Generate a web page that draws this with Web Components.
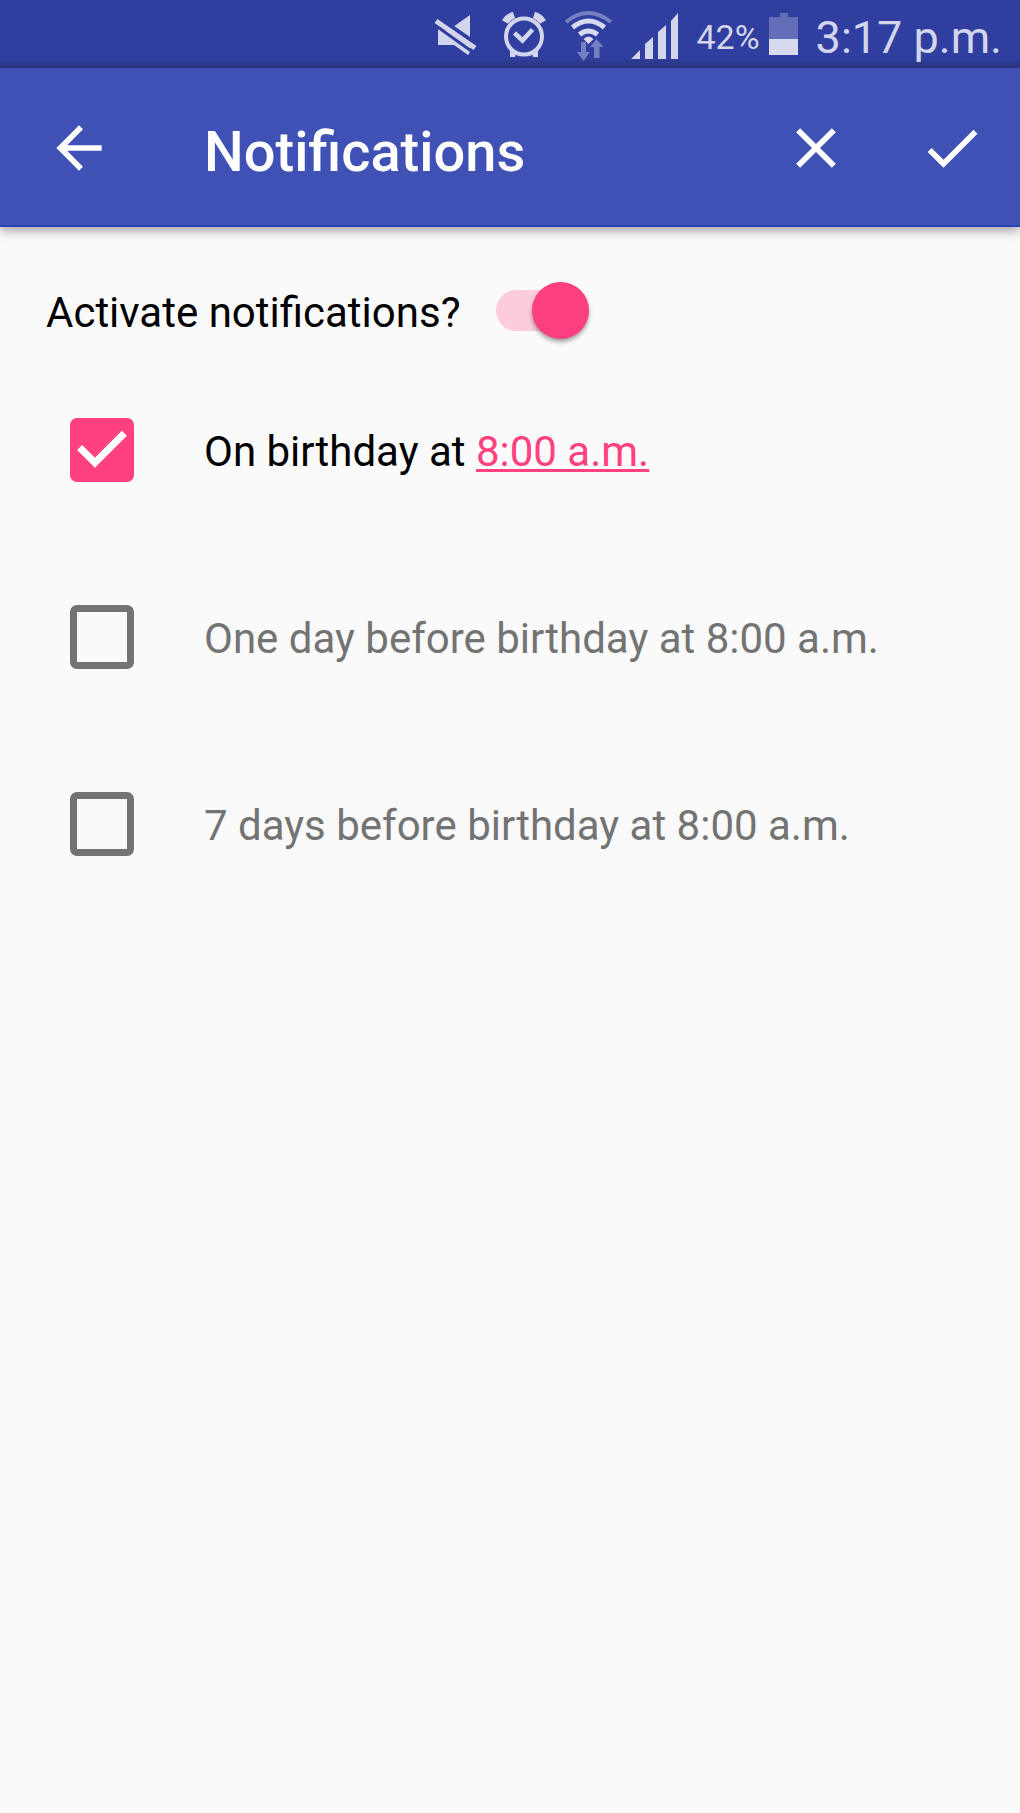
<!DOCTYPE html>
<html lang="en">
<head>
<meta charset="utf-8">
<meta name="viewport" content="width=device-width, initial-scale=1">
<title>Notifications</title>
<style>
  html, body { margin: 0; min-height: 100%; background: #fafafa; }
  body { font-family: Roboto, "Liberation Sans", sans-serif; font-size: 42px; color: #000; }
</style>
</head>
<body>
<notification-screen></notification-screen>
<script>
function define(name, html, setup) {
  const template = document.createElement('template');
  template.innerHTML = html;
  customElements.define(name, class extends HTMLElement {
    constructor() {
      super();
      this.attachShadow({ mode: 'open' }).append(template.content.cloneNode(true));
    }
    connectedCallback() { if (setup) setup(this, this.shadowRoot); }
  });
}

define('battery-level', `
  <style>
    :host { display: flex; align-items: center; gap: 8px; font-size: 34px; }
    svg { display: block; width: 32px; height: 62px; }
  </style>
  <span><slot></slot></span>
  <svg viewBox="768 6 32 62" fill="#d8dbef" aria-hidden="true">
    <path opacity=".3" d="M780 13h8v4h10v22h-29V17h11z"/><path d="M769 39h29v16h-29z"/>
  </svg>`);

define('status-bar', `
  <style>
    :host { display: flex; align-items: center; justify-content: flex-end; gap: 16px; box-sizing: border-box;
      height: 68px; padding: 6px 18px 0 16px; color: #d2d5ec; white-space: nowrap;
      background: linear-gradient(#303f9f 58px, #29367f 68px); }
    svg { display: block; width: 50px; height: 62px; flex: none; }
    svg.alarm { width: 48px; }
    time { font-size: 45px; }
  </style>
  <svg viewBox="436 6 50 62" fill="#d2d5ec" aria-hidden="true">
    <path d="M440 29V45H456L470 55L472 52V15L455 27L449 31z"/>
    <path d="M439 17L482 47" stroke="#303f9f" stroke-width="5"/>
    <path d="M434 23L476 53" stroke="#303f9f" stroke-width="3"/>
    <path d="M438 21L477 48" stroke="#d2d5ec" stroke-width="5"/>
  </svg>
  <svg class="alarm" viewBox="502 6 48 62" aria-hidden="true">
    <g fill="none" stroke="#d2d5ec">
      <circle cx="526" cy="36.500" r="18" stroke-width="4"/>
      <path d="M507 22q3-5 9-7M545 22q-3-5-9-7" stroke-width="7"/>
      <path d="M516.500 33l8 7.500 10-11" stroke-width="4.500"/>
    </g>
    <path fill="#d2d5ec" d="M512 50l6 3-1 4h-5zM540 50l-6 3 1 4h5z"/>
  </svg>
  <svg viewBox="566 6 50 62" aria-hidden="true">
    <g fill="none" stroke="#d8dbef" stroke-width="5">
      <path opacity=".42" stroke-width="4" d="M568 22q22-18 45 0"/>
      <path d="M574.500 27.500q16-13 32 0"/>
      <path d="M581.500 34.500q9-7 18 0"/>
    </g>
    <path fill="#d8dbef" d="M585.500 39q5-5 10 0l-5 5z"/>
    <path fill="#7480c2" d="M583 42h5v10h4l-6.500 9-6.500-9h4zM596 58v-11h-4l6.500-8 7 8h-4v11z"/>
  </svg>
  <svg viewBox="632 6 50 62" fill="#d2d5ec" aria-hidden="true">
    <path d="M633 59l9-9v9zM647 59V44l8-7v22zM660 59V32l8-7v34zM673 59V21l7-8v46z"/>
  </svg>
  <battery-level>42%</battery-level>
  <time datetime="15:17">3:17 p.m.</time>`);

define('icon-button', `
  <style>
    :host { display: block; flex: none; }
    button { display: grid; place-items: center; width: 136px; height: 156px; margin: 0; padding: 0;
      border: 0; background: none; color: inherit; cursor: pointer; }
    svg { width: 68px; height: 68px; fill: currentColor; }
  </style>
  <button type="button"><svg viewBox="0 0 24 24" aria-hidden="true"><path/></svg></button>`,
  (host, root) => {
    const icons = {
      back: 'M20 11H7.830l5.590-5.590L12 4l-8 8 8 8 1.410-1.410L7.830 13H20v-2z',
      close: 'M19 6.410L17.590 5 12 10.590 6.410 5 5 6.410 10.590 12 5 17.590 6.410 19 12 13.410 17.590 19 19 17.590 13.410 12z',
      check: 'M9 16.170L4.830 12l-1.420 1.410L9 19 21 7l-1.410-1.410z'
    };
    root.querySelector('path').setAttribute('d', icons[host.getAttribute('icon')]);
    root.querySelector('button').setAttribute('aria-label', host.getAttribute('label'));
  });

define('app-bar', `
  <style>
    :host { display: flex; align-items: center; height: 159px; box-sizing: border-box; padding: 2px 0 0 11px;
      background: #3f51b5; color: #fff; border-bottom: 2px solid #2743b2; box-shadow: 0 4px 10px rgba(0,0,0,.34); }
    h1 { flex: 1; margin: 0; padding: 8px 0 0 57px; font-size: 56px; line-height: 64px; font-weight: 500; }
  </style>
  <icon-button icon="back" label="Back"></icon-button>
  <h1><slot></slot></h1>
  <icon-button icon="close" label="Cancel"></icon-button>
  <icon-button icon="check" label="Save"></icon-button>`);

define('toggle-switch', `
  <style>
    :host { display: block; }
    label { display: flex; align-items: center; gap: 36px; line-height: 57px; }
    .text { padding-top: 4px; line-height: 53px; }
    input { appearance: none; display: flex; align-items: center; justify-content: flex-start; width: 93px; height: 57px; margin: 0;
      background: linear-gradient(#d0d0d0, #d0d0d0) 0 50% / 84px 41px no-repeat; border-radius: 21px; }
    input::before { content: ""; width: 57px; height: 57px; border-radius: 50%; background: #f1f1f1;
      box-shadow: 0 3px 4px rgba(0,0,0,.35); }
    input:checked { justify-content: flex-end; background: none; }
    .control { display: grid; align-items: center; }
    .control > * { grid-area: 1 / 1; }
    .track { width: 84px; height: 41px; border-radius: 21px; background: #fccbdc; }
    input:checked::before { background: #fc3f80; }
  </style>
  <label><span class="text"><slot></slot></span><span class="control"><span class="track"></span><input type="checkbox" role="switch"></span></label>`,
  (host, root) => { root.querySelector('input').checked = host.hasAttribute('checked'); });

define('check-option', `
  <style>
    :host { display: block; color: #737373; }
    :host([checked]) { color: #000; }
    .row { display: flex; align-items: center; gap: 70px; }
    label { padding-top: 4px; line-height: 60px; }
    .box { display: grid; flex: none; width: 64px; height: 64px; }
    .box > * { grid-area: 1 / 1; }
    input { appearance: none; box-sizing: border-box; width: 64px; height: 64px; margin: 0;
      border: 7px solid #737373; border-radius: 7px; }
    input:checked { border-color: #ff4081; background: #ff4081; }
    svg { width: 64px; height: 64px; fill: #fff; visibility: hidden; pointer-events: none; }
    input:checked + svg { visibility: visible; }
  </style>
  <div class="row">
    <span class="box"><input type="checkbox" id="choice"><svg viewBox="3 3 18 18" aria-hidden="true"><path d="M10 17l-5-5 1.410-1.410L10 14.170l7.590-7.590L19 8z"/></svg></span>
    <label for="choice"><slot></slot></label>
  </div>`,
  (host, root) => { root.querySelector('input').checked = host.hasAttribute('checked'); });

define('notification-screen', `
  <style>
    :host { display: block; }
    main { padding: 55px 46px; }
    .options { display: flex; flex-direction: column; gap: 123px; padding: 79px 24px 0; }
    a { color: #ff4081; text-decoration: underline; text-decoration-thickness: 3px; text-underline-offset: 3px; text-decoration-skip-ink: none; }
  </style>
  <status-bar></status-bar>
  <app-bar>Notifications</app-bar>
  <main>
    <toggle-switch checked>Activate notifications?</toggle-switch>
    <div class="options">
      <check-option checked>On birthday at <a href="#time">8:00 a.m.</a></check-option>
      <check-option>One day before birthday at 8:00 a.m.</check-option>
      <check-option>7 days before birthday at 8:00 a.m.</check-option>
    </div>
  </main>`);
</script>
</body>
</html>
